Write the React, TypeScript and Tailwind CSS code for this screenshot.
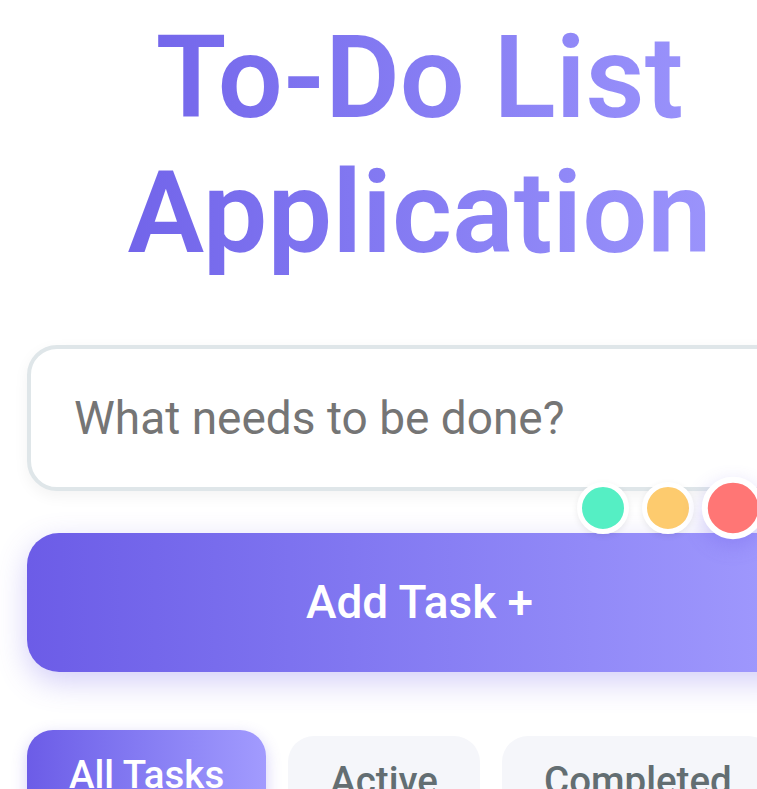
import { useState } from 'react'

const priorities = [
  { id: 'low', color: 'bg-[#55efc4]' },
  { id: 'medium', color: 'bg-[#fdcb6e]' },
  { id: 'high', color: 'bg-[#ff7675]' },
]

const filters = ['All Tasks', 'Active', 'Completed']

export default function App() {
  const [task, setTask] = useState('')
  const [priority, setPriority] = useState('high')
  const [filter, setFilter] = useState('All Tasks')

  return (
    <div className="min-h-screen w-full overflow-hidden bg-white font-['Roboto','Noto_Sans',sans-serif]">
      <div className="ml-[27px] w-[785px] pt-[10px]">
        <h1 className="bg-gradient-to-r from-[#6c5ce7] to-[#a29bfe] bg-clip-text text-center text-[115px] font-semibold leading-[135px] text-transparent">
          To-Do List Application
        </h1>

        <div className="relative mt-[65px]">
          <input
            type="text"
            value={task}
            onChange={(e) => setTask(e.target.value)}
            placeholder="What needs to be done?"
            className="h-[146px] w-full rounded-[30px] border-4 border-[#dfe6e9] bg-white px-[43px] text-[46px] text-[#2d3436] shadow-[0_5px_15px_rgba(0,0,0,0.05)] outline-none placeholder:text-[#757575]"
          />
          <div className="absolute right-[53px] top-[137px] flex items-center gap-[13px]">
            {priorities.map((p) => (
              <button
                key={p.id}
                onClick={() => setPriority(p.id)}
                className={`h-[52px] w-[52px] rounded-full border-[5px] border-white ${p.color} ${
                  priority === p.id
                    ? 'scale-[1.2] shadow-[0_6px_16px_rgba(108,92,231,0.3)]'
                    : 'shadow-[0_2px_6px_rgba(0,0,0,0.08)]'
                }`}
              />
            ))}
          </div>
        </div>

        <button className="mt-[42px] h-[139px] w-full rounded-[32px] bg-gradient-to-r from-[#6c5ce7] to-[#a29bfe] text-[46px] font-medium text-white shadow-[0_10px_30px_rgba(108,92,231,0.3)]">
          Add Task +
        </button>

        <div className="mt-[58px] flex items-start gap-[22px]">
          {filters.map((f) =>
            filter === f ? (
              <button
                key={f}
                onClick={() => setFilter(f)}
                className="rounded-[26px] bg-gradient-to-r from-[#6c5ce7] to-[#a29bfe] px-[42px] pb-[19px] pt-[16px] text-[38.5px] font-medium text-white shadow-[0_5px_15px_rgba(108,92,231,0.3)]"
              >
                {f}
              </button>
            ) : (
              <button
                key={f}
                onClick={() => setFilter(f)}
                className="mt-[6px] rounded-[26px] bg-[#f5f6fa] px-[42px] pb-[19px] pt-[16px] text-[38.5px] font-medium text-[#636e72]"
              >
                {f}
              </button>
            ),
          )}
        </div>
      </div>
    </div>
  )
}
